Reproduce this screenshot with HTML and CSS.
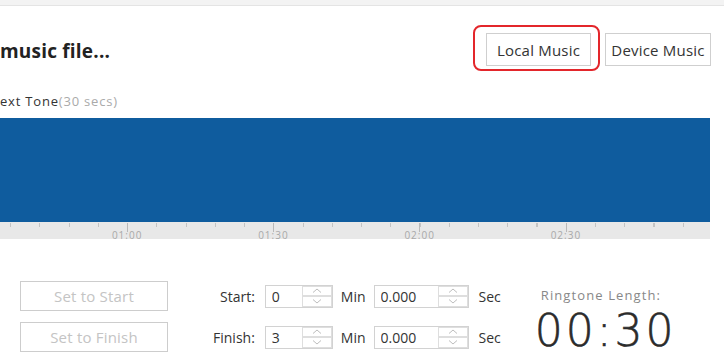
FILE: index.html
```html
<!doctype html>
<html>
  <head>
    <meta charset="utf-8">
    <title>Ringtone maker</title>
    <link rel="stylesheet" href="styles.css">
  </head>
<body>

<div class="topbar"></div>

<div class="header">
  <h1 class="title">music file...</h1>
  <div class="sources">
    <span class="highlight"><button class="btn local">Local Music</button></span>
    <button class="btn device">Device Music</button>
  </div>
</div>

<div class="trackname">ext Tone<span class="dur">(30 secs)</span></div>

<div class="wave"></div>
<div class="ruler">
  <span>01:00</span>
  <span>01:30</span>
  <span>02:00</span>
  <span>02:30</span>
</div>

<div class="controls">
  <div class="setbtns">
    <button disabled>Set to Start</button>
    <button disabled>Set to Finish</button>
  </div>

  <div class="fields">
    <label>Start:</label>
    <div class="spin">
      <input value="0">
      <div class="arrows">
        <span><svg width="10" height="5" viewBox="0 0 10 5"><path d="M1 4.5 5 1 9 4.5"/></svg></span>
        <span><svg width="10" height="5" viewBox="0 0 10 5"><path d="M1 .5 5 4 9 .5"/></svg></span>
      </div>
    </div>
    <span>Min</span>
    <div class="spin">
      <input value="0.000">
      <div class="arrows">
        <span><svg width="10" height="5" viewBox="0 0 10 5"><path d="M1 4.5 5 1 9 4.5"/></svg></span>
        <span><svg width="10" height="5" viewBox="0 0 10 5"><path d="M1 .5 5 4 9 .5"/></svg></span>
      </div>
    </div>
    <span class="unit">Sec</span>

    <label>Finish:</label>
    <div class="spin">
      <input value="3">
      <div class="arrows">
        <span><svg width="10" height="5" viewBox="0 0 10 5"><path d="M1 4.5 5 1 9 4.5"/></svg></span>
        <span><svg width="10" height="5" viewBox="0 0 10 5"><path d="M1 .5 5 4 9 .5"/></svg></span>
      </div>
    </div>
    <span>Min</span>
    <div class="spin">
      <input value="0.000">
      <div class="arrows">
        <span><svg width="10" height="5" viewBox="0 0 10 5"><path d="M1 4.5 5 1 9 4.5"/></svg></span>
        <span><svg width="10" height="5" viewBox="0 0 10 5"><path d="M1 .5 5 4 9 .5"/></svg></span>
      </div>
    </div>
    <span class="unit">Sec</span>
  </div>

  <div class="length">
    <div class="caption">Ringtone Length:</div>
    <div class="time">00:30</div>
  </div>
</div>

</body>
</html>
```

FILE: styles.css
```css
body{
  margin: 0;
  padding: 0;
  background: #fff;
  color: #333;
  font-family: "Open Sans", "Noto Sans", sans-serif;
  overflow: hidden;
}
.topbar{
  height: 5px;
  background: #f3f3f3;
  border-bottom: 1px solid #e4e4e4;
}
.header{
  display: flex;
  justify-content: space-between;
  align-items: center;
  padding: 19px 13px 0 0;
}
.title{
  margin: 6px 0 0 0;
  font-size: 19px;
  font-weight: 700;
  letter-spacing: 0.2px;
  color: #222;
}
.sources{
  display: flex;
  align-items: flex-start;
  gap: 5px;
}
.highlight{
  display: flex;
  border: 2px solid #e3262b;
  border-radius: 8px;
  padding: 6px 7px 3px 11px;
}
.btn{
  height: 33px;
  padding: 0;
  background: #fff;
  border: 1px solid #cfcfcf;
  color: #333;
  font-family: inherit;
  font-size: 15px;
  letter-spacing: 0.2px;
}
.btn.local{
  width: 105px;
}
.btn.device{
  width: 106px;
  margin-top: 8px;
}
.trackname{
  margin-top: 22px;
  font-size: 13px;
  line-height: 16px;
  letter-spacing: 0.8px;
  color: #333;
}
.dur{
  color: #aaa;
}
.wave{
  margin-top: 9px;
  width: 710px;
  height: 104px;
  background: #0f5c9e;
}
.ruler{
  display: flex;
  width: 710px;
  height: 17px;
  box-sizing: border-box;
  padding-left: 54px;
  background-color: #e8e8e8;
  background-image:
    repeating-linear-gradient(to right, #b9b9b9 0 1px, transparent 1px 146.25px),
    repeating-linear-gradient(to right, #c4c4c4 0 1px, transparent 1px 29.25px);
  background-size: 100% 9px, 100% 4px;
  background-position: 127px 1px, 10px 1px;
  background-repeat: no-repeat;
}
.ruler span{
  flex: none;
  width: 146.25px;
  text-align: center;
  font-size: 10px;
  line-height: 10px;
  letter-spacing: 1px;
  padding-top: 8px;
  color: #a9a9a9;
}
.controls{
  display: flex;
  padding: 42px 0 0 20px;
}
.setbtns{
  display: flex;
  flex-direction: column;
  gap: 11px;
}
.setbtns button{
  width: 148px;
  height: 30px;
  padding: 0;
  background: #fff;
  border: 1px solid #cdcdcd;
  color: #c4c4c4;
  font-family: inherit;
  font-size: 15px;
  letter-spacing: 0.2px;
}
.fields{
  display: grid;
  grid-template-columns: auto 68px auto 95px auto;
  grid-template-rows: 30px 30px;
  row-gap: 11px;
  column-gap: 8px;
  align-items: center;
  margin-left: 45px;
  font-size: 14px;
  color: #333;
}
.fields label{
  justify-self: end;
  padding-right: 2px;
}
.fields .unit{
  padding-left: 2px;
}
.spin{
  display: flex;
  height: 23px;
  box-sizing: border-box;
  border: 1px solid #d2d2d2;
}
.spin input{
  flex: 1;
  min-width: 0;
  border: 0;
  padding: 0 0 0 6px;
  font-family: inherit;
  font-size: 14px;
  color: #333;
  background: #fff;
}
.arrows{
  display: flex;
  flex-direction: column;
  width: 30px;
}
.arrows span{
  flex: 1;
  display: flex;
  align-items: center;
  justify-content: center;
  border: 1px solid #dedede;
}
.arrows svg path{
  fill: none;
  stroke: #bdbdbd;
  stroke-width: 1;
}
.length{
  margin-left: 34px;
  padding-top: 5px;
}
.caption{
  font-size: 13px;
  letter-spacing: 1.1px;
  color: #888;
  margin-left: 6px;
}
.time{
  font-family: "DejaVu Sans", sans-serif;
  font-size: 44px;
  font-weight: 200;
  -webkit-text-stroke: 0.6px #2b2b2b;
  letter-spacing: 3px;
  line-height: 1;
  margin-top: 5px;
  color: #2b2b2b;
}
```
